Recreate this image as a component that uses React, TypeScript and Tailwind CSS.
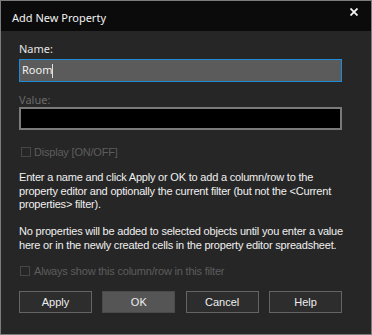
export default function App() {
  const sans = { fontFamily: '"Liberation Sans", Arial, sans-serif' };
  const ui = { fontFamily: '"Noto Sans", "Open Sans", sans-serif' };

  return (
    <div className="w-[372px] h-[335px] border border-[#7c7c7c] bg-[#262626] flex flex-col" style={sans}>
      {/* Title bar */}
      <div className="h-[30px] bg-[#0b0b0b] flex justify-between pl-[11px] pr-[13px] shrink-0">
        <span className="mt-[10px] text-[11px] leading-[14px] text-[#f2f2f2]" style={ui}>Add New Property</span>
        <svg width="8" height="8" viewBox="0 0 8 8" className="mt-[7px]">
          <path d="M0.5 0.5 L7.5 7.5 M7.5 0.5 L0.5 7.5" stroke="#f5f5f5" strokeWidth="1.8" />
        </svg>
      </div>

      <div className="pl-[18px] pr-[29px] flex flex-col">
        {/* Name */}
        <div className="mt-[11px] h-[14px] leading-[14px] text-[11px] text-[#e6e6e6]" style={ui}>Name:</div>
        <div className="mt-[3px] h-[23px] border border-[#1e8ad8] bg-[#5b5b5b] flex items-center pl-[2px]">
          <span className="text-[11px] text-[#f2f2f2]" style={ui}>Room</span>
          <span className="w-px h-[14px] bg-[#e0e0e0]" />
        </div>

        {/* Value */}
        <div className="mt-[11px] h-[14px] leading-[14px] text-[11px] text-[#6b6b6b]" style={ui}>Value:</div>
        <div className="h-[23px] border-2 border-[#7a7a7a] bg-black" />

        {/* Display checkbox */}
        <div className="mt-[15px] h-[14px] flex items-center gap-[3px] pl-[2px]">
          <span className="w-[10px] h-[10px] border border-[#474747]" />
          <span className="text-[11px] text-[#5d5d5d] tracking-[-0.2px]">Display [ON/OFF]</span>
        </div>

        {/* Info text */}
        <p className="mt-[12px] text-[11px] leading-[13.5px] text-[#f0f0f0] tracking-[-0.2px] whitespace-nowrap">
          Enter a name and click Apply or OK to add a column/row to the
          <br />
          property editor and optionally the current filter (but not the &lt;Current
          <br />
          properties&gt; filter).
        </p>
        <p className="mt-[13.5px] text-[11px] leading-[13.5px] text-[#f0f0f0] tracking-[-0.2px] whitespace-nowrap">
          No properties will be added to selected objects until you enter a value
          <br />
          here or in the newly created cells in the property editor spreadsheet.
        </p>

        {/* Always show checkbox */}
        <div className="mt-[12px] h-[14px] flex items-center gap-[4px] pl-[1px]">
          <span className="w-[10px] h-[10px] border border-[#474747]" />
          <span className="text-[11px] text-[#5d5d5d] tracking-[-0.2px]">Always show this column/row in this filter</span>
        </div>

        {/* Buttons */}
        <div className="mt-[13px] flex gap-[10.5px]">
          {['Apply', 'OK', 'Cancel', 'Help'].map((label) => (
            <button
              key={label}
              className={
                label === 'OK'
                  ? 'w-[75px] h-[22px] border border-[#4a4a4a] bg-[#555555] text-[11px] text-[#eeeeee]'
                  : 'w-[75px] h-[22px] border border-[#646464] bg-[#2d2d2d] text-[11px] text-[#eeeeee]'
              }
              style={sans}
            >
              {label}
            </button>
          ))}
        </div>
      </div>
    </div>
  );
}
